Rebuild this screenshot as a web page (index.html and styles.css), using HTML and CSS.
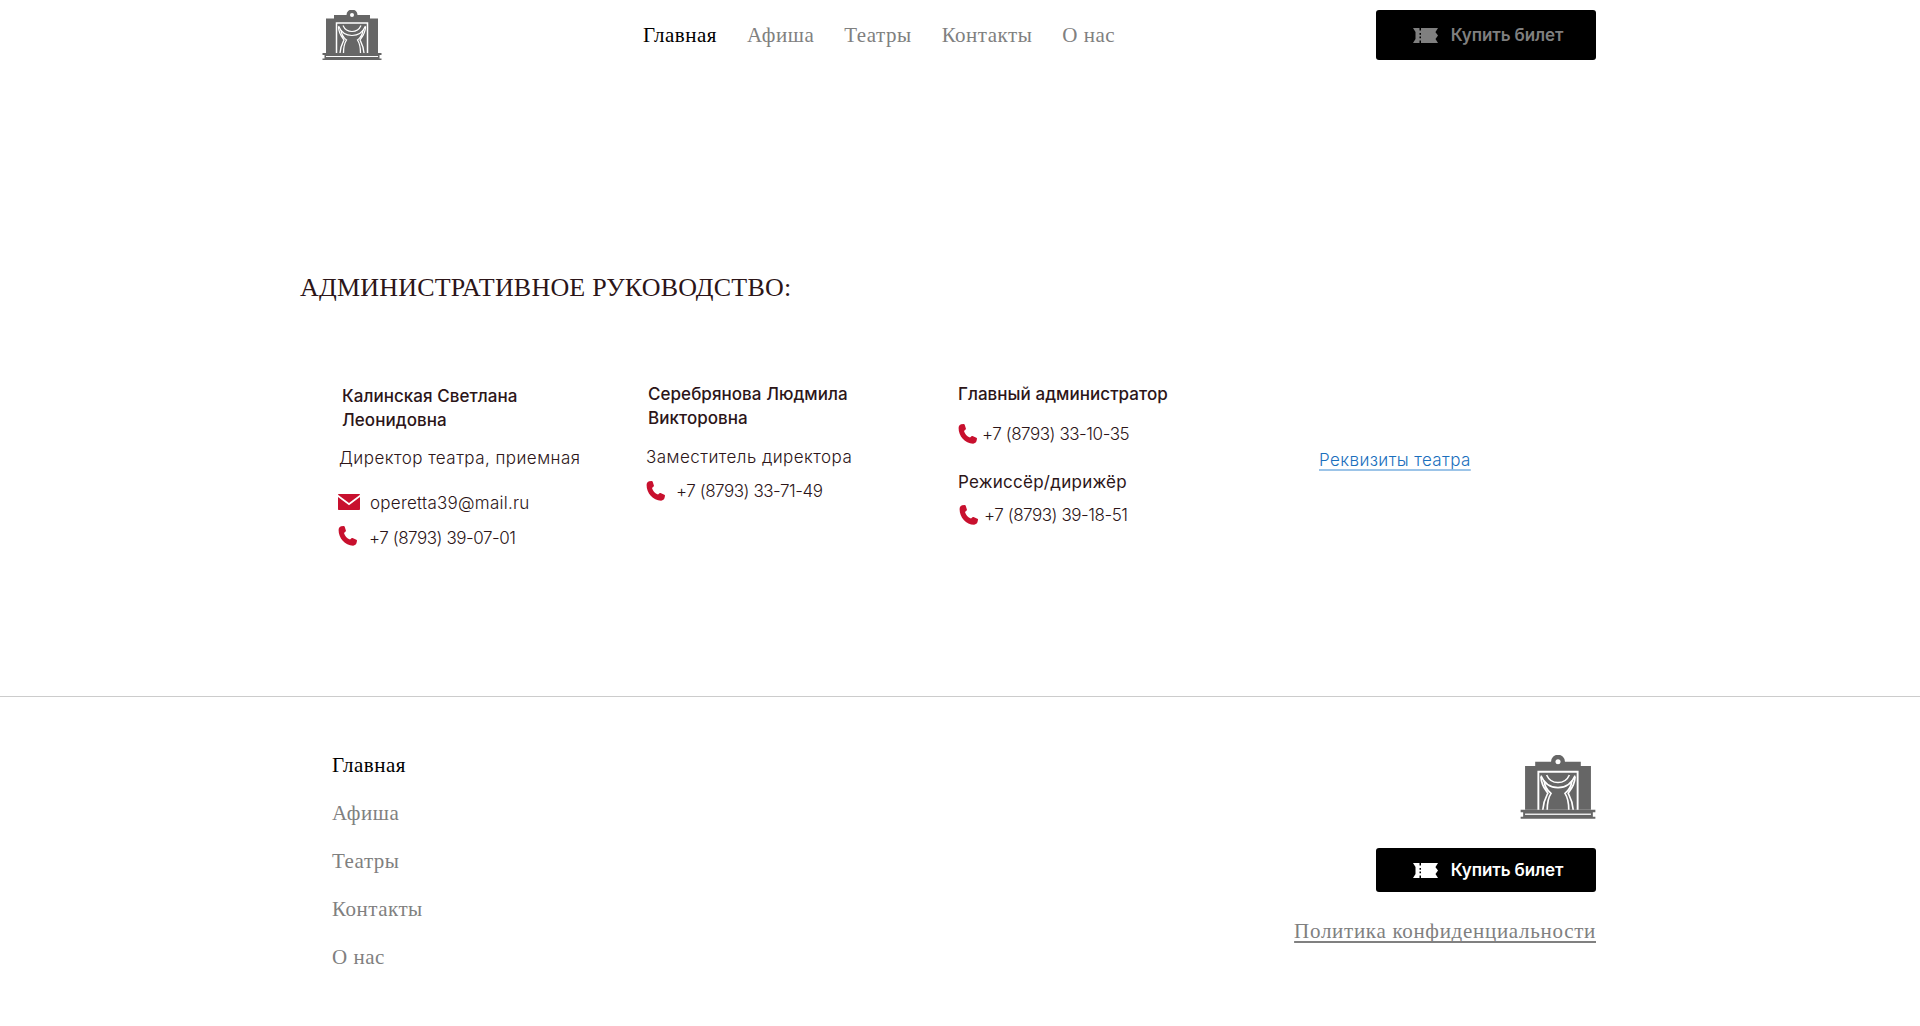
FILE: index.html
```html
<!DOCTYPE html>
<html lang="ru">
<head>
<meta charset="utf-8">
<title>Контакты</title>
<link rel="stylesheet" href="styles.css">
</head>
<body>
<svg class="defs" width="0" height="0" aria-hidden="true">
  <defs>
    <symbol id="logo" viewBox="0 0 60 50">
      <path fill="#666" d="M4 8.500h8V5h12.500a5.500 5.500 0 0 1 11 0H48v3.500h8V43H4z"/>
      <circle cx="30" cy="5" r="2" fill="#fff"/>
      <path fill="#666" d="M0.500 43h59v2h-2v3.500h2V50H0.500v-1.500h2V45h-2z"/>
      <rect x="4" y="46" width="52" height="1" fill="#fff"/>
      <g fill="none" stroke="#fff">
        <path stroke-width="1.500" d="M14.500 43V13h31v30"/>
        <path stroke-width="1.200" d="M16.500 16c3 7 8 9.500 13.500 9.500S40.500 23 43.500 16M21 15.500c2 4.500 5 6 9 6s7-1.500 9-6"/>
        <path stroke-width="1.300" d="M16.500 17c.5 8 4.500 11 5.500 13-1.500 3-3.500 6-4 13M19 20c.5 5 3.500 8.500 5.500 10-2 3-3 8-3 13M43.500 17c-.5 8-4.500 11-5.500 13 1.500 3 3.500 6 4 13M41 20c-.5 5-3.500 8.500-5.500 10 2 3 3 8 3 13"/>
      </g>
    </symbol>
    <symbol id="ticket" viewBox="0 0 25 15">
      <path d="M0 0h6.500v2.500h1.500V0H25l-2.500 4 0 .2L25 7.500 22.500 11 25 15H8v-2.500H6.500V15H0l2.500-4V4L0 0zM6.500 5v1.800H8V5zm0 3.500v1.800H8V8.500z" fill-rule="evenodd"/>
    </symbol>
    <symbol id="phone" viewBox="0 0 20 20">
      <path d="M3.200.3 5.700.1c.5 0 .9.2 1 .7l1.200 3.700c.1.400 0 .8-.3 1L6 6.900c.7 2.800 3 5.400 6 6.700l1.500-1.400c.3-.3.700-.3 1-.2l3.900 1.700c.5.200.7.600.6 1.100l-.5 2.300c-.4 1.500-1.500 2.500-3.400 2.600C7 19.700.5 12 .6 4 .7 2 1.600.6 3.200.3z"/>
    </symbol>
    <symbol id="mail" viewBox="0 0 22 16">
      <path d="M1 0h20c.5 0 1 .300 1 .800L11 9 0 .8C0 .3.500 0 1 0z"/>
      <path d="M0 3l11 8.300L22 3v12c0 .6-.4 1-1 1H1c-.6 0-1-.4-1-1z"/>
    </symbol>
  </defs>
</svg>

<div class="container">
  <header class="header">
    <a class="logo" href="#"><svg class="logo-img"><use href="#logo"/></svg></a>
    <nav class="top-nav">
      <a class="nav-link is-active" href="#">Главная</a>
      <a class="nav-link" href="#">Афиша</a>
      <a class="nav-link" href="#">Театры</a>
      <a class="nav-link" href="#">Контакты</a>
      <a class="nav-link" href="#">О нас</a>
    </nav>
    <a class="buy buy-top" href="#"><svg class="ticket"><use href="#ticket"/></svg><span>Купить билет</span></a>
  </header>

  <main class="main">
    <h1 class="title">АДМИНИСТРАТИВНОЕ РУКОВОДСТВО:</h1>
    <div class="people">
      <section class="col col-1">
        <h2 class="name">Калинская Светлана<br>Леонидовна</h2>
        <p class="role">Директор театра, приемная</p>
        <p class="contact contact-mail"><svg class="ico-mail"><use href="#mail"/></svg><span>operetta39@mail.ru</span></p>
        <p class="contact contact-phone1"><svg class="ico-phone"><use href="#phone"/></svg><span class="num">+7 (8793) 39-07-01</span></p>
      </section>
      <section class="col col-2">
        <h2 class="name">Серебрянова Людмила<br>Викторовна</h2>
        <p class="role">Заместитель директора</p>
        <p class="contact contact-phone2"><svg class="ico-phone"><use href="#phone"/></svg><span class="num">+7 (8793) 33-71-49</span></p>
      </section>
      <section class="col col-3">
        <h2 class="name">Главный администратор</h2>
        <p class="contact contact-phone3"><svg class="ico-phone"><use href="#phone"/></svg><span class="num">+7 (8793) 33-10-35</span></p>
        <h3 class="post">Режиссёр/дирижёр</h3>
        <p class="contact contact-phone4"><svg class="ico-phone"><use href="#phone"/></svg><span class="num">+7 (8793) 39-18-51</span></p>
      </section>
      <section class="col col-4">
        <a class="req" href="#">Реквизиты театра</a>
      </section>
    </div>
  </main>
</div>

<footer class="footer">
  <div class="container footer-in">
    <nav class="foot-nav">
      <a class="nav-link is-active" href="#">Главная</a>
      <a class="nav-link" href="#">Афиша</a>
      <a class="nav-link" href="#">Театры</a>
      <a class="nav-link" href="#">Контакты</a>
      <a class="nav-link" href="#">О нас</a>
    </nav>
    <div class="foot-right">
      <svg class="logo-foot"><use href="#logo"/></svg>
      <a class="buy buy-foot" href="#"><svg class="ticket"><use href="#ticket"/></svg><span>Купить билет</span></a>
      <a class="policy" href="#">Политика конфиденциальности</a>
    </div>
  </div>
</footer>
</body>
</html>
```
FILE: styles.css
```css
* { box-sizing: border-box; }
html, body { margin: 0; padding: 0; }
body {
  background: #fff;
  color: #2c1518;
  font-family: "Inter", "Noto Sans", sans-serif;
  height: 1026px;
  overflow: hidden;
}
.defs { display: block; height: 0; }
a { text-decoration: none; color: inherit; }
p, h1, h2, h3 { margin: 0; font-weight: 400; }

.container { width: 1296px; margin-left: 300px; }

.header { display: flex; align-items: flex-start; height: 273px; }
.logo { display: block; margin: 10px 0 0 22px; width: 60px; height: 50px; }
.logo-img { display: block; width: 60px; height: 50px; }
.top-nav { display: flex; gap: 30px; margin: 22px auto 0 261px; }
.nav-link {
  font-family: "Liberation Serif", "Times New Roman", serif;
  font-size: 21px;
  line-height: 26px;
  color: #808080;
  letter-spacing: .5px;
}
.nav-link.is-active { color: #000; }

.buy {
  display: flex;
  align-items: center;
  justify-content: center;
  gap: 13px;
  width: 220px;
  padding-left: 4px;
  background: #000;
  border-radius: 3px;
  font-size: 17px;
  font-weight: 600;
  letter-spacing: -.1px;
}
.buy-top { height: 50px; margin-top: 10px; color: #7f7f7f; }
.buy-foot { height: 44px; color: #fff; margin-top: 29px; }
.ticket { width: 25px; height: 15px; fill: currentColor; }

.title {
  font-family: "Liberation Serif", "Times New Roman", serif;
  font-size: 26px;
  line-height: 30px;
  letter-spacing: .2px;
  color: #2c1518;
}
.people {
  display: grid;
  grid-template-columns: 308px 312px 360px 278px;
  margin: 81px 0 0 38px;
  height: 312px;
}
.name { font-size: 17px; font-weight: 550; line-height: 24px; letter-spacing: .05px; }
.role { font-size: 17px; font-weight: 300; line-height: 24px; letter-spacing: .45px; }
.post { font-size: 17px; font-weight: 400; line-height: 24px; margin-top: 24px; letter-spacing: .25px; }
.contact { display: flex; align-items: center; font-size: 17px; font-weight: 300; line-height: 24px; letter-spacing: .25px; }
.num { letter-spacing: -.45px; }
.ico-phone { width: 20px; height: 20px; fill: #c8102e; flex: none; }
.ico-mail { width: 22px; height: 16px; fill: #c8102e; flex: none; }

.col-1 .name { margin-left: 4px; }
.col-1 .role { margin: 14px 0 0 1px; }
.contact-mail { gap: 10px; margin-top: 21px; }
.contact-mail .ico-mail { margin-bottom: 2px; }
.contact-phone1 { gap: 11px; margin-top: 11px; }
.contact-phone1 .ico-phone { margin-bottom: 4px; }
.col-2 { margin-top: -2px; }
.col-2 .name { margin-left: 2px; }
.col-2 .role { margin-top: 15px; }
.contact-phone2 { gap: 10px; margin-top: 10px; }
.col-3 { margin-top: -2px; }
.contact-phone3 { gap: 4px; margin-top: 16px; }
.contact-phone4 { gap: 5px; margin-top: 9px; margin-left: 1px; }
.col-4 { padding: 64px 0 0 1px; }
.req {
  font-size: 17px;
  font-weight: 300;
  line-height: 24px;
  letter-spacing: .4px;
  color: #1a6fbd;
  text-decoration: underline;
  text-decoration-color: #9cc4e8;
  text-decoration-thickness: 2px;
  text-decoration-skip-ink: none;
  text-underline-offset: 3px;
}

.footer { border-top: 1px solid #ccc; }
.footer-in { display: flex; justify-content: space-between; }
.foot-nav { display: flex; flex-direction: column; gap: 22px; padding: 55px 0 0 32px; }
.foot-right { display: flex; flex-direction: column; align-items: flex-end; padding-top: 58px; }
.logo-foot { display: block; width: 76px; height: 64px; }
.policy {
  font-family: "Liberation Serif", "Times New Roman", serif;
  font-size: 21px;
  line-height: 26px;
  color: #808080;
  text-decoration: underline;
  text-decoration-skip-ink: none;
  text-underline-offset: 3px;
  margin-top: 26px;
  letter-spacing: .7px;
}
```
